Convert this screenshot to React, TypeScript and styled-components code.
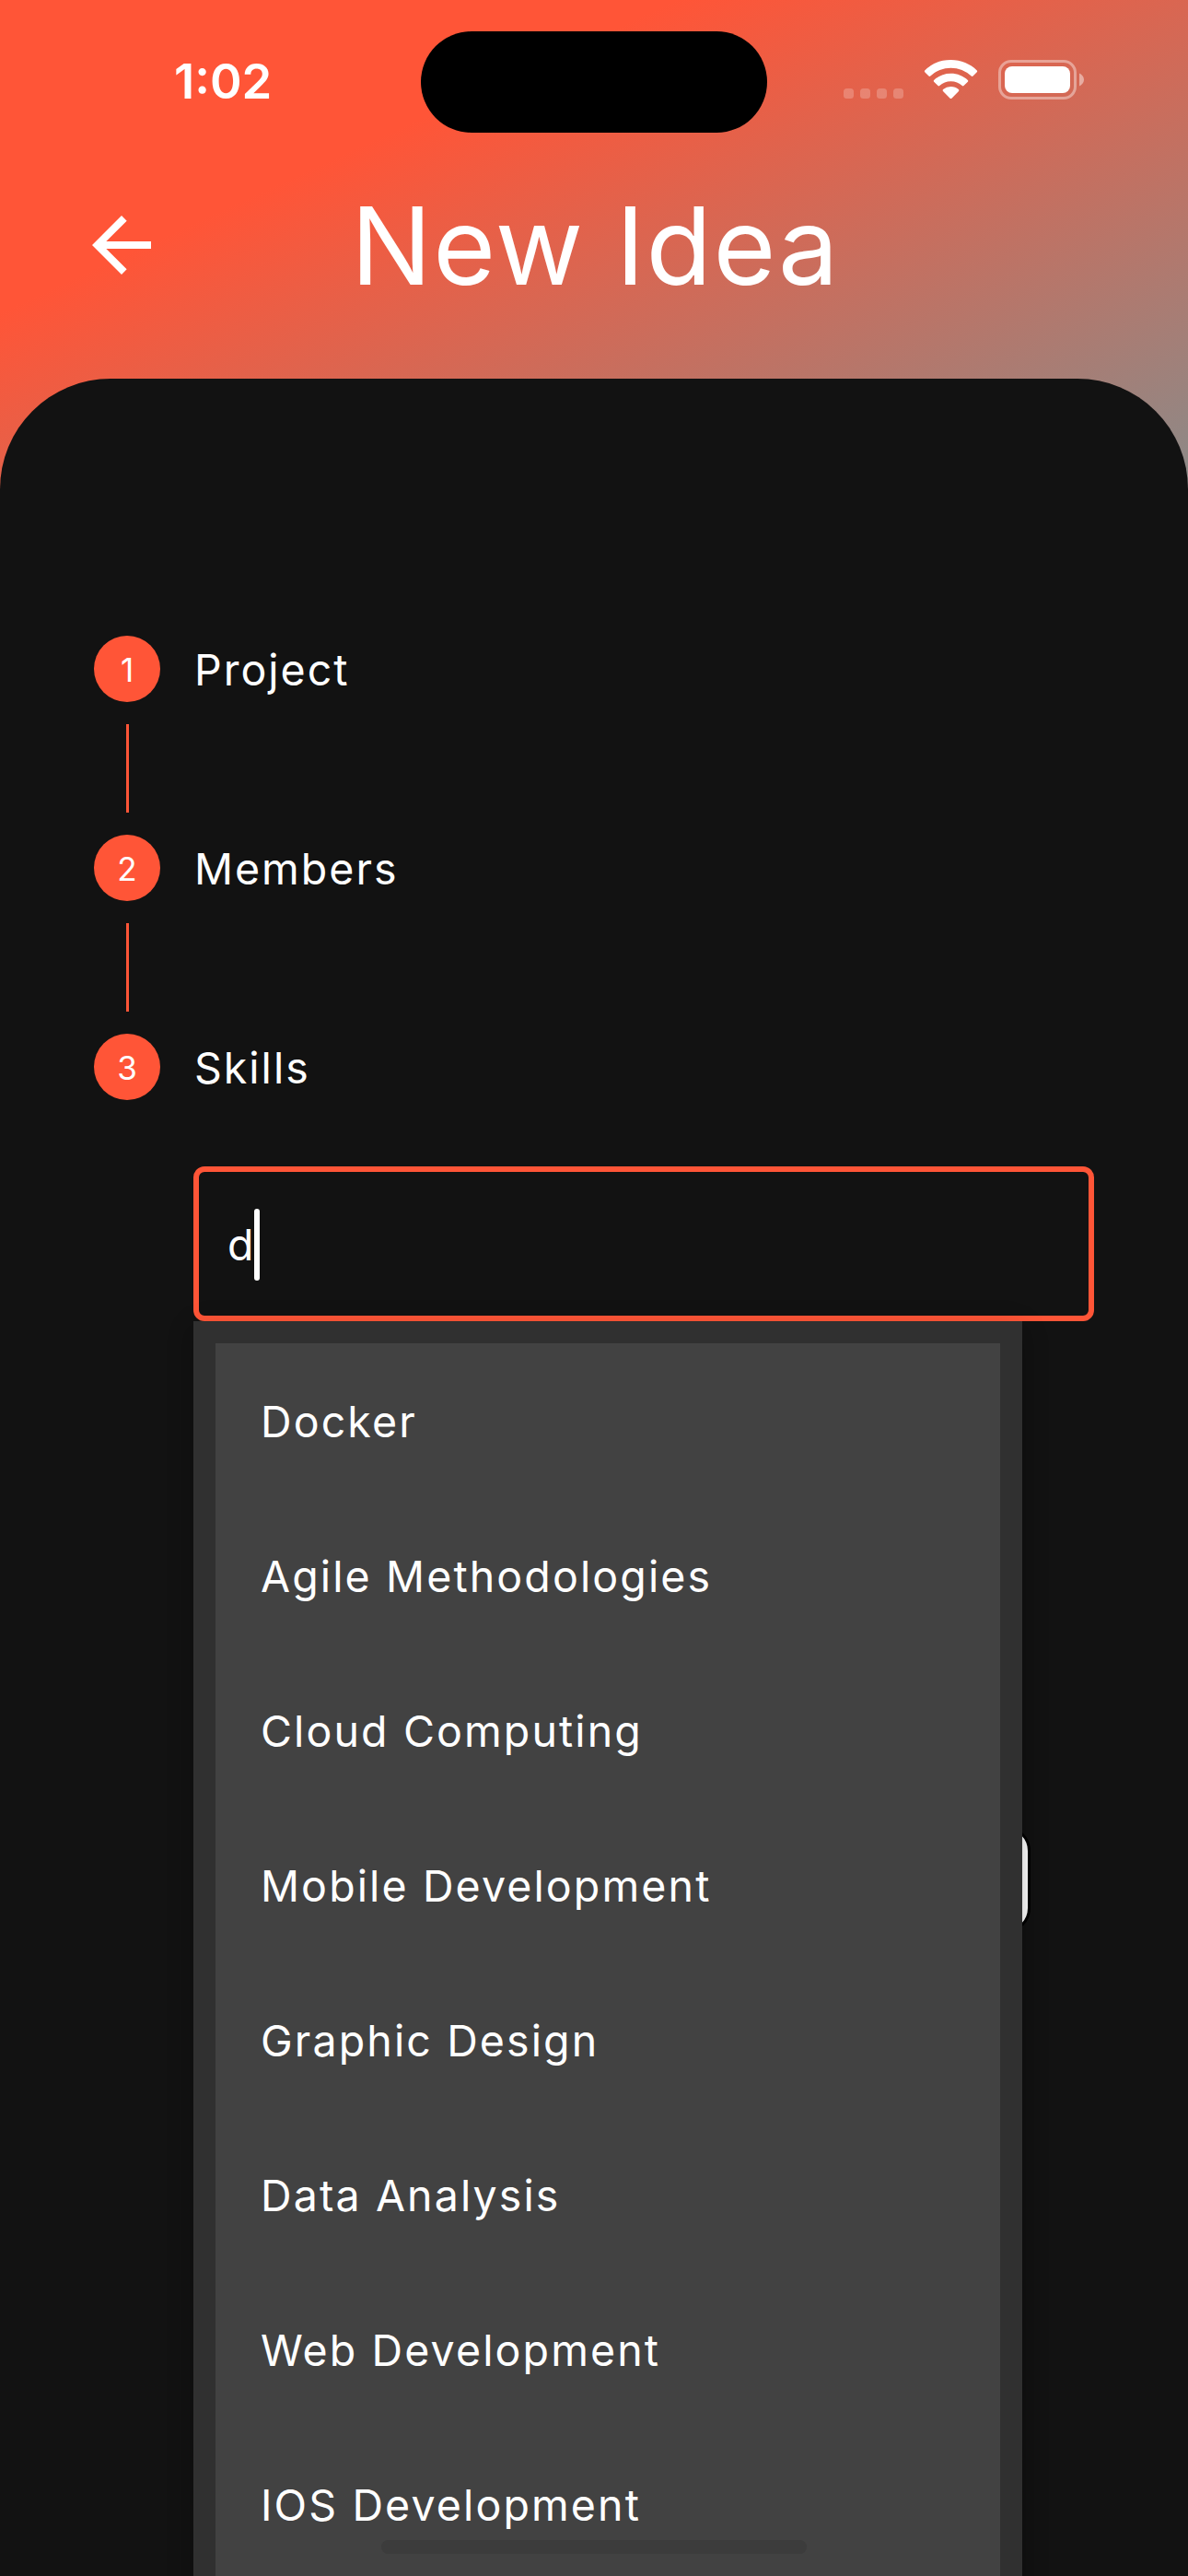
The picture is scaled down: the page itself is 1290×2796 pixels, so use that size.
import React from "react";
import styled, { createGlobalStyle } from "styled-components";

const ORANGE = "#ff5537";

const GlobalStyle = createGlobalStyle`
  * { box-sizing: border-box; }
  html, body { margin: 0; padding: 0; background: #121212; }
  body { font-family: Inter, "Liberation Sans", sans-serif; color: #fff; }
`;

const Screen = styled.div`
  position: relative;
  width: 1290px;
  height: 2796px;
  overflow: hidden;
  display: flex;
  flex-direction: column;
  background: linear-gradient(155.23deg, ${ORANGE} 10%, #898b8a 33.5%);
`;

const StatusBar = styled.header`
  display: flex;
  align-items: flex-start;
  height: 177px;
  flex: none;
`;

const Clock = styled.div`
  width: 457px;
  padding: 57px 0 0 189px;
  font-size: 52.5px;
  line-height: 63px;
  font-weight: 600;
  letter-spacing: 0;
`;

const Island = styled.div`
  width: 376px;
  height: 110px;
  margin-top: 34px;
  border-radius: 55px;
  background: #000;
`;

const StatusIcons = styled.svg`
  display: block;
  width: 270px;
  height: 50px;
  margin: 62px 0 0 77px;
`;

const TitleBar = styled.div`
  display: grid;
  grid-template-columns: 84px 96px 1fr 180px;
  align-items: center;
  height: 178px;
  margin-bottom: 56px;
  flex: none;
`;

const BackButton = styled.button`
  grid-column: 2;
  width: 96px;
  height: 96px;
  padding: 0;
  border: 0;
  background: none;
  color: #fff;
  svg { display: block; width: 96px; height: 96px; fill: currentColor; }
`;

const Title = styled.h1`
  margin: 0;
  padding: 2px 0 0 3px;
  text-align: center;
  font-size: 116.5px;
  line-height: 140px;
  font-weight: 400;
  letter-spacing: 1.5px;
  white-space: nowrap;
`;

const Panel = styled.main`
  position: relative;
  flex: 1;
  padding: 279px 102px 0;
  border-radius: 120px 120px 0 0;
  background: #121212;
`;

const Step = styled.div`
  display: flex;
  align-items: center;
  height: 72px;
`;

const Bullet = styled.span`
  display: flex;
  align-items: center;
  justify-content: center;
  width: 72px;
  height: 72px;
  margin-right: 37px;
  border-radius: 50%;
  background: ${ORANGE};
  font-size: 35px;
  line-height: 44px;
  padding-top: 2px;
`;

const StepLabel = styled.span`
  font-size: 46.5px;
  line-height: 56px;
  letter-spacing: 2px;
  padding-top: 2px;
`;

const Connector = styled.div`
  width: 3px;
  height: 96px;
  margin: 24px 0 24px 34.5px;
  background: ${ORANGE};
`;

const FieldArea = styled.div`
  position: relative;
  margin: 72px 0 0 108px;
`;

const Field = styled.div`
  display: flex;
  align-items: center;
  height: 168px;
  padding: 1px 0 0 31px;
  border: 6px solid ${ORANGE};
  border-radius: 12px;
  font-size: 46.5px;
  line-height: 56px;
`;

const Caret = styled.i`
  width: 6px;
  height: 78px;
  margin-left: 1px;
  border-radius: 3px;
  background: #fff;
`;

const NextButton = styled.div`
  position: absolute;
  top: 716px;
  right: 69px;
  width: 300px;
  height: 116px;
  border: 3px solid #000;
  border-radius: 27px;
  background: #fff;
`;

const Menu = styled.ul`
  position: absolute;
  top: 168px;
  left: 0;
  width: 900px;
  height: 1400px;
  margin: 0;
  padding: 24px;
  list-style: none;
  background: #303030;
  box-shadow: 0 12px 15px -3px rgba(0, 0, 0, 0.2), 0 6px 30px rgba(0, 0, 0, 0.14);
`;

const Option = styled.li`
  display: flex;
  align-items: center;
  height: 168px;
  padding: 1px 0 0 49px;
  background: #424242;
  font-size: 46.5px;
  line-height: 56px;
  letter-spacing: 2.12px;
  white-space: nowrap;
`;

const HomeIndicator = styled.div`
  position: absolute;
  left: 414px;
  bottom: 24px;
  width: 462px;
  height: 15px;
  border-radius: 8px;
  background: #3c3c3c;
`;

const steps = ["Project", "Members", "Skills"];

const options = [
  "Docker",
  "Agile Methodologies",
  "Cloud Computing",
  "Mobile Development",
  "Graphic Design",
  "Data Analysis",
  "Web Development",
  "IOS Development",
];

function StatusGlyphs() {
  return (
    <StatusIcons viewBox="910 62 270 50" fill="#fff">
      {[916, 934, 952, 970].map((x) => (
        <rect key={x} x={x} y="96" width="11" height="11" rx="3.5" opacity="0.22" />
      ))}
      <path d="M1032.5 65c11 0 21 4.300 28.300 11.400.500.500.5 1.300 0 1.800l-4.300 4.400c-.5.500-1.300.5-1.800 0a32 32 0 0 0-44.400 0c-.5.500-1.300.5-1.800 0l-4.300-4.400c-.5-.5-.5-1.300 0-1.800a40.500 40.500 0 0 1 28.300-11.400z" />
      <path d="M1032.500 79.700c7 0 13.500 2.700 18.400 7.200.5.500.5 1.300 0 1.800l-4.400 4.400c-.5.500-1.200.5-1.700 0a18.200 18.200 0 0 0-24.600 0c-.5.500-1.200.5-1.700 0l-4.400-4.400c-.5-.5-.5-1.300 0-1.800a27 27 0 0 1 18.400-7.200z" />
      <path d="M1032.500 94c3.200 0 6.200 1.200 8.400 3.100.6.500.6 1.300.1 1.800l-7.600 7.800c-.5.500-1.300.5-1.800 0l-7.600-7.800c-.5-.5-.5-1.300.1-1.800a13 13 0 0 1 8.400-3.100z" />
      <rect x="1085.500" y="66.500" width="82" height="40" rx="12.500" fill="none" stroke="#fff" strokeWidth="3" opacity="0.4" />
      <rect x="1091" y="72" width="71" height="29" rx="8" />
      <path d="M1172 79.500c3 1.300 5 4.100 5 7s-2 5.700-5 7z" opacity="0.45" />
    </StatusIcons>
  );
}

export default function App() {
  return (
    <>
      <GlobalStyle />
      <Screen>
        <StatusBar>
          <Clock>1:02</Clock>
          <Island />
          <StatusGlyphs />
        </StatusBar>
        <TitleBar>
          <BackButton aria-label="Back">
            <svg viewBox="0 0 24 24">
              <path d="M20 11H7.830l5.590-5.590L12 4l-8 8 8 8 1.410-1.410L7.830 13H20v-2z" />
            </svg>
          </BackButton>
          <Title>New Idea</Title>
        </TitleBar>
        <Panel>
          {steps.map((label, i) => (
            <React.Fragment key={label}>
              {i > 0 && <Connector />}
              <Step>
                <Bullet>{i + 1}</Bullet>
                <StepLabel>{label}</StepLabel>
              </Step>
            </React.Fragment>
          ))}
          <FieldArea>
            <Field>
              d<Caret />
            </Field>
            <NextButton />
            <Menu>
              {options.map((name) => (
                <Option key={name}>{name}</Option>
              ))}
            </Menu>
          </FieldArea>
        </Panel>
        <HomeIndicator />
      </Screen>
    </>
  );
}
